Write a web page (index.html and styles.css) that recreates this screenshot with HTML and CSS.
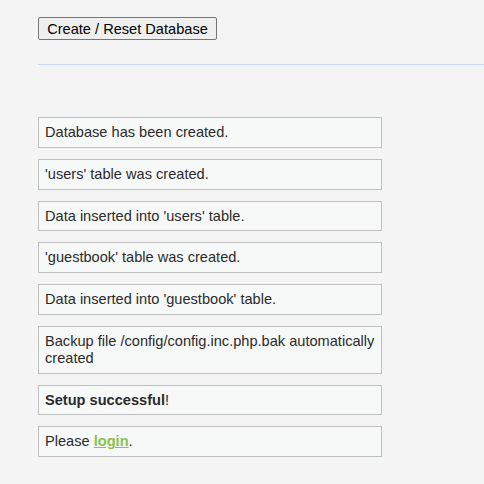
FILE: index.html
```html
<!DOCTYPE html>
<html>
<head>
<meta charset="utf-8">
<link rel="stylesheet" href="styles.css">
</head>
<body>
<div class="page">
  <form class="setup-form">
    <button type="button" class="btn">Create / Reset Database</button>
  </form>
  <div class="rule"></div>
  <div class="messages">
    <div class="message">Database has been created.</div>
    <div class="message">'users' table was created.</div>
    <div class="message">Data inserted into 'users' table.</div>
    <div class="message">'guestbook' table was created.</div>
    <div class="message">Data inserted into 'guestbook' table.</div>
    <div class="message">Backup file /config/config.inc.php.bak automatically created</div>
    <div class="message"><strong>Setup successful</strong>!</div>
    <div class="message">Please <a href="#" class="login">login</a>.</div>
  </div>
</div>
</body>
</html>
```

FILE: styles.css
```css
html, body {
  margin: 0;
  padding: 0;
  background: #f4f4f4;
}
body {
  font-family: "Liberation Sans", Arial, sans-serif;
  font-size: 14.6px;
  color: #2b2b2b;
}
.page {
  padding: 17px 0 0 38px;
}
.setup-form {
  margin: 0;
}
.btn {
  font-family: "Liberation Sans", Arial, sans-serif;
  font-size: 14.6px;
  color: #000;
  background: #efefef;
  border: 1px solid #767676;
  border-radius: 2px;
  height: 23px;
  width: 179px;
  padding: 0 4px;
  line-height: 20px;
}
.rule {
  margin-top: 24px;
  border-top: 1px solid #cdd9f2;
}
.messages {
  padding-top: 52px;
  width: 344px;
}
.message {
  background: #f7f8f8;
  border: 1px solid #c0c0c0;
  padding: 6px 6px;
  line-height: 16.8px;
  margin-bottom: 11px;
}
.login {
  color: #8bc34a;
  font-weight: bold;
  text-decoration: underline;
}
```
